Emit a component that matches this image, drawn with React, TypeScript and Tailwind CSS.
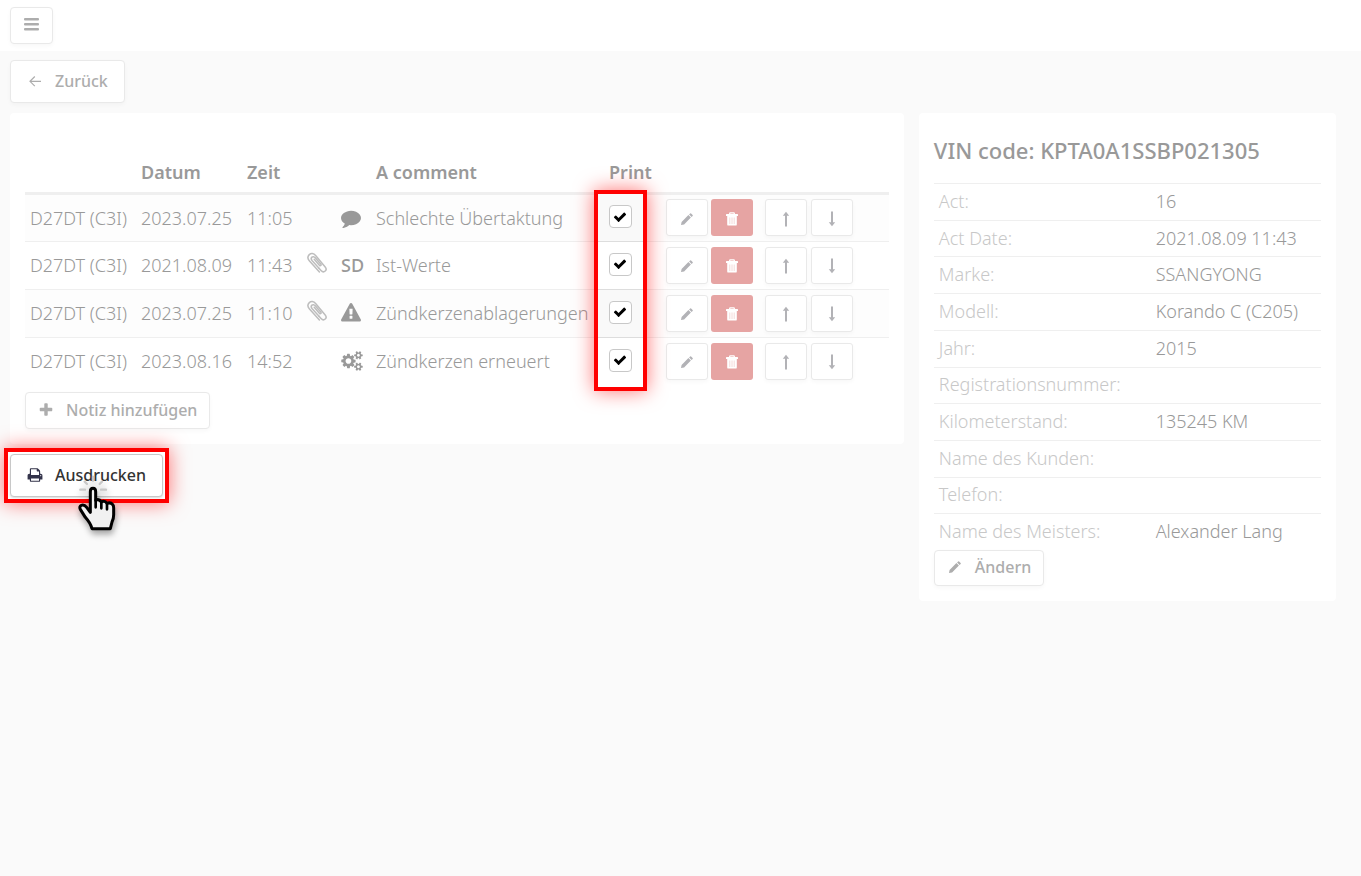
import type { ReactNode } from "react";

const ICONS = {
  comment:
    "M1792 896q0 174-120 321.500t-326 233-450 85.500q-70 0-145-8-198 175-460 242-49 14-114 22-17 2-30.500-9t-17.500-29v-1q-3-4-.5-12t2-10 4.500-9.500l6-9 7-8.500 8-9q7-8 31-34.500t34.500-38 31-39.500 32.500-51 27-59 26-76q-157-89-247.500-220t-90.500-281q0-130 71-248.500t191-204.500 286-136.500 348-50.500q244 0 450 85.500t326 233 120 321.500z",
  warning:
    "M1024 1375v-190q0-14-9.500-23.500t-22.500-9.500h-192q-13 0-22.500 9.500t-9.500 23.500v190q0 14 9.500 23.500t22.500 9.500h192q13 0 22.500-9.500t9.500-23.500zm-2-374l18-459q0-12-10-19-13-11-24-11h-220q-11 0-24 11-10 7-10 21l17 457q0 10 10 16.500t24 6.500h185q14 0 23.500-6.500t10.500-16.500zm-14-934l768 1408q35 63-2 126-17 29-46.500 46t-63.500 17h-1536q-34 0-63.500-17t-46.500-46q-37-63-2-126l768-1408q17-31 47-49t65-18 65 18 47 49z",
  cogs: "M896 896q0-106-75-181t-181-75-181 75-75 181 75 181 181 75 181-75 75-181zm768 512q0-52-38-90t-90-38-90 38-38 90q0 53 37.500 90.500t90.500 37.500 90.500-37.500 37.500-90.500zm0-1024q0-52-38-90t-90-38-90 38-38 90q0 53 37.500 90.500t90.500 37.500 90.500-37.500 37.500-90.500zm-384 421v185q0 10-7 19.500t-16 10.500l-155 24q-11 35-32 76 34 48 90 115 7 11 7 20 0 12-7 19-23 30-82.500 89.500t-78.500 59.500q-11 0-21-7l-115-90q-37 19-77 31-11 108-23 155-7 24-30 24h-186q-11 0-20-7.500t-10-17.500l-23-153q-34-10-75-31l-118 89q-7 7-20 7-11 0-21-8-144-133-144-160 0-9 7-19 10-14 41-53t47-61q-23-44-35-82l-152-24q-10-1-17-9.500t-7-19.500v-185q0-10 7-19.500t16-10.500l155-24q11-35 32-76-34-48-90-115-7-11-7-20 0-12 7-20 22-30 82-89t79-59q11 0 21 7l115 90q34-18 77-32 11-108 23-154 7-24 30-24h186q11 0 20 7.500t10 17.500l23 153q34 10 75 31l118-89q8-7 20-7 11 0 21 8 144 133 144 160 0 8-7 19-12 16-42 54t-45 60q23 48 34 82l152 23q10 2 17 10.500t7 19.500zm640 533v140q0 16-149 31-12 27-30 52 51 113 51 138 0 4-4 7-122 71-124 71-8 0-46-47t-52-68q-20 2-30 2t-30-2q-14 21-52 68t-46 47q-2 0-124-71-4-3-4-7 0-25 51-138-18-25-30-52-149-15-149-31v-140q0-16 149-31 13-29 30-52-51-113-51-138 0-4 4-7 4-2 35-20t59-34 30-16q8 0 46 46.500t52 67.500q20-2 30-2t30 2q51-71 92-112l6-2q4 0 124 70 4 3 4 7 0 25-51 138 17 23 30 52 149 15 149 31zm0-1024v140q0 16-149 31-12 27-30 52 51 113 51 138 0 4-4 7-122 71-124 71-8 0-46-47t-52-68q-20 2-30 2t-30-2q-14 21-52 68t-46 47q-2 0-124-71-4-3-4-7 0-25 51-138-18-25-30-52-149-15-149-31v-140q0-16 149-31 13-29 30-52-51-113-51-138 0-4 4-7 4-2 35-20t59-34 30-16q8 0 46 46.500t52 67.500q20-2 30-2t30 2q51-71 92-112l6-2q4 0 124 70 4 3 4 7 0 25-51 138 17 23 30 52 149 15 149 31z",
  plus: "M1600 736v192q0 40-28 68t-68 28h-416v416q0 40-28 68t-68 28h-192q-40 0-68-28t-28-68v-416h-416q-40 0-68-28t-28-68v-192q0-40 28-68t68-28h416v-416q0-40 28-68t68-28h192q40 0 68 28t28 68v416h416q40 0 68 28t28 68z",
  print:
    "M448 1536h896v-256h-896v256zm0-640h896v-384h-160q-40 0-68-28t-28-68v-160h-640v640zm1152 64q0-26-19-45t-45-19-45 19-19 45 19 45 45 19 45-19 19-45zm128 0v416q0 13-9.500 22.500t-22.500 9.500h-224v160q0 40-28 68t-68 28h-960q-40 0-68-28t-28-68v-160h-224q-13 0-22.500-9.500t-9.500-22.500v-416q0-79 56.500-135.500t135.500-56.500h64v-544q0-40 28-68t68-28h672q40 0 88 20t76 48l152 152q28 28 48 76t20 88v256h64q79 0 135.500 56.500t56.500 135.500z",
  check:
    "M1671 566q0 40-28 68l-724 724-136 136q-28 28-68 28t-68-28l-136-136-362-362q-28-28-28-68t28-68l136-136q28-28 68-28t68 28l294 295 656-657q28-28 68-28t68 28l136 136q28 28 28 68z",
};

function Glyph({ name, className, wide = false }: { name: keyof typeof ICONS; className: string; wide?: boolean }) {
  return (
    <svg viewBox={wide ? "0 0 1920 1792" : "0 0 1792 1792"} className={className} fill="currentColor" aria-hidden="true">
      <path d={ICONS[name]} />
    </svg>
  );
}

function Pencil({ className }: { className: string }) {
  return (
    <svg viewBox="0 0 12 12" className={className} fill="currentColor" aria-hidden="true">
      <path d="M0 12 .6 8.9 7.400 2.100 9.900 4.600 3.100 11.400 0 12zM8.100 1.400 9.100.4Q9.600-.1 10.100.4L11.600 1.900Q12.100 2.400 11.600 2.900L10.600 3.900z" />
    </svg>
  );
}

function Trash() {
  return (
    <svg viewBox="0 0 12 14" className="h-3.5 w-3" fill="none" aria-hidden="true">
      <path d="M3.7 2V1.4Q3.7.8 4.3.8H7.7Q8.3.8 8.3 1.4V2" stroke="white" strokeWidth="1.3" />
      <path d="M.7 1.9H11.3Q12 1.9 12 2.6V4H0V2.6Q0 1.9.7 1.9zM1.2 4H10.8V12.4Q10.8 13.6 9.6 13.6H2.4Q1.2 13.6 1.2 12.4z" fill="white" />
      <path d="M3.8 5.5V12M6 5.5V12M8.2 5.5V12" stroke="#f3d6d5" strokeWidth=".9" />
    </svg>
  );
}

function VerticalArrow({ down = false }: { down?: boolean }) {
  return (
    <svg viewBox="0 0 8 16" className={down ? "h-4 w-2 rotate-180" : "h-4 w-2"} aria-hidden="true">
      <path d="M3 15.500V4.800H.8L4 .8 7.200 4.800H5V15.500z" fill="currentColor" />
    </svg>
  );
}

function Clip() {
  return (
    <svg viewBox="0 0 20 22" className="mb-1 h-[22px] w-5" fill="none" stroke="#bdbdbd" strokeWidth="1.5" strokeLinecap="round" aria-hidden="true">
      <path d="M7.200 7.200 12.600 13.400C13.400 14.300 14.700 13.200 13.900 12.200L8.300 5.700C5.800 3 2.900 6 5 8.500L12 16.300" />
      <path d="M12 16.300 14 18.500C17 21.700 20.800 18 18.200 14.900L8.600 3.400C6.700 1.200 4 1 2.300 2.600.6 4.200.6 6.800 2.500 9L12.400 20" />
    </svg>
  );
}

function HandCursor() {
  return (
    <svg viewBox="225 285 135 195" className="pointer-events-none absolute top-[21px] left-[65px] z-20 h-[65px] w-[45px] drop-shadow-[1px_4px_3px_rgba(0,0,0,0.35)]" fill="none" aria-hidden="true">
      <path d="M241 329H255M303 329H318M254 305 261 312M306 305 299 312M279 290V302" stroke="#c8c8c8" strokeWidth="7" strokeLinecap="round" />
      <path d="M271 397V335Q271 325 279 325T287 335V361Q297 355 304 366 314 360 321 370 332 366 338 374 341 377 341 384V404Q341 416 336 426L331 446H276Q272 430 256 412L241 388Q237 379 244 376 253 373 260 382z" fill="#f1f1f1" stroke="black" strokeWidth="9" strokeLinejoin="round" />
      <path d="M287 361V382M304 366V385M321 370V388" stroke="black" strokeWidth="8" strokeLinecap="round" />
    </svg>
  );
}

const buttonBase = "flex items-center rounded border border-[#e9e9e9] bg-white pb-0.5 text-base font-medium text-[#adadad] shadow-[0_2px_4px_rgba(0,0,0,0.03)]";
const squareButton = "flex h-[37px] w-[42px] items-center justify-center rounded-[3px] border border-[#e9e9e9] bg-white pt-0.5 text-[#b2b2b6] shadow-[0_2px_4px_rgba(0,0,0,0.03)]";

type Note = { date: string; time: string; clip: boolean; icon: ReactNode; comment: string };

const notes: Note[] = [
  { date: "2023.07.25", time: "11:05", clip: false, icon: <Glyph name="comment" className="h-5 w-5" />, comment: "Schlechte Übertaktung" },
  { date: "2021.08.09", time: "11:43", clip: true, icon: "SD", comment: "Ist-Werte" },
  { date: "2023.07.25", time: "11:10", clip: true, icon: <Glyph name="warning" className="h-5 w-5" />, comment: "Zündkerzenablagerungen" },
  { date: "2023.08.16", time: "14:52", clip: false, icon: <Glyph name="cogs" wide className="h-5 w-[22px]" />, comment: "Zündkerzen erneuert" },
];

const details: [string, string][] = [
  ["Act:", "16"],
  ["Act Date:", "2021.08.09 11:43"],
  ["Marke:", "SSANGYONG"],
  ["Modell:", "Korando C (C205)"],
  ["Jahr:", "2015"],
  ["Registrationsnummer:", ""],
  ["Kilometerstand:", "135245 KM"],
  ["Name des Kunden:", ""],
  ["Telefon:", ""],
  ["Name des Meisters:", "Alexander Lang"],
];

function PrintHighlight() {
  return (
    <span className="pointer-events-none absolute -top-[5px] -left-2.5 flex h-[201px] w-[53px] flex-col border-4 border-[#ff0000] bg-white shadow-[0_0_20px_rgba(255,0,0,0.55)]">
      {notes.map((note) => (
        <span key={note.comment} className="h-12 border-b border-[#ddd] odd:bg-[#f9f9f9] last:border-b-0" />
      ))}
    </span>
  );
}

function NoteRow({ note, first }: { note: Note; first: boolean }) {
  return (
    <tr className="h-12 border-b border-[#efefef] odd:bg-[#fdfdfd] last:border-b-0">
      <td className="px-[5px]">D27DT (C3I)</td>
      <td className="px-[5px]">{note.date}</td>
      <td className="px-[5px]">{note.time}</td>
      <td className="px-[5px]">{note.clip && <Clip />}</td>
      <td className="px-[5px] font-medium">{note.icon}</td>
      <td className="px-[5px] whitespace-nowrap">{note.comment}</td>
      <td className="relative px-[5px] pb-0.5">
        {first && <PrintHighlight />}
        <label className="relative z-10 grid h-[23px] w-[23px] place-items-center">
          <input
            type="checkbox"
            defaultChecked
            aria-label={`Print ${note.comment}`}
            className="peer col-start-1 row-start-1 h-[23px] w-[23px] appearance-none rounded border border-[#c8c8c8] bg-white"
          />
          <Glyph name="check" className="pointer-events-none invisible col-start-1 row-start-1 mr-0.5 h-3.5 w-3.5 text-black peer-checked:visible" />
        </label>
      </td>
      <td className="px-[5px]">
        <div className="flex gap-3">
          <div className="flex gap-[3px]">
            <button type="button" aria-label="Edit" className={squareButton}>
              <Pencil className="h-3 w-3" />
            </button>
            <button type="button" aria-label="Delete" className="flex h-[37px] w-[42px] items-center justify-center rounded-[3px] bg-[#e6a4a3] pt-0.5">
              <Trash />
            </button>
          </div>
          <div className="flex gap-1">
            <button type="button" aria-label="Move up" className={squareButton}>
              <VerticalArrow />
            </button>
            <button type="button" aria-label="Move down" className={squareButton}>
              <VerticalArrow down />
            </button>
          </div>
        </div>
      </td>
    </tr>
  );
}

export default function App() {
  return (
    <div className="min-h-screen bg-[#fafafa] font-['Noto_Sans','Open_Sans',sans-serif] text-lg font-[350] text-[#999]">
      <header className="flex h-[51px] items-center bg-white px-2.5">
        <button type="button" aria-label="Menu" className={`${buttonBase} h-[37px] w-[43px] justify-center`}>
          <svg viewBox="0 0 15 13" className="h-[13px] w-[15px]" fill="currentColor" aria-hidden="true">
            <rect width="15" height="2.600" rx="1" />
            <rect y="5" width="15" height="2.600" rx="1" />
            <rect y="10" width="15" height="2.600" rx="1" />
          </svg>
        </button>
      </header>
      <main className="pt-[9px] pr-[25px] pl-2.5">
        <button type="button" className={`${buttonBase} h-[43px] gap-3 px-4`}>
          <svg viewBox="0 0 16 16" className="h-4 w-4" fill="none" stroke="currentColor" strokeWidth="1.2" aria-hidden="true">
            <path d="M14 8.300H3M7.800 3.500 3 8.300 7.800 13.100" />
          </svg>
          Zurück
        </button>
        <div className="mt-2.5 grid grid-cols-[15fr_7fr] items-start gap-[15px]">
          <div>
            <section className="rounded bg-white px-[15px] pt-10 pb-[15px]">
              <table className="w-full table-fixed border-collapse text-left">
                <colgroup>
                  <col className="w-[111px]" />
                  <col className="w-[106px]" />
                  <col className="w-[60px]" />
                  <col className="w-[34px]" />
                  <col className="w-[35px]" />
                  <col className="w-[233px]" />
                  <col className="w-[57px]" />
                  <col />
                </colgroup>
                <thead>
                  <tr className="h-10 border-b-3 border-[#efefef] [&>th]:px-[5px] [&>th]:font-semibold">
                    <th />
                    <th>Datum</th>
                    <th>Zeit</th>
                    <th />
                    <th />
                    <th>A comment</th>
                    <th>Print</th>
                    <th />
                  </tr>
                </thead>
                <tbody>
                  {notes.map((note, i) => (
                    <NoteRow key={note.comment} note={note} first={i === 0} />
                  ))}
                </tbody>
              </table>
              <button type="button" className={`${buttonBase} mt-[7px] h-[37px] gap-3 px-3`}>
                <Glyph name="plus" className="h-4 w-4" />
                Notiz hinzufügen
              </button>
            </section>
            <div className="relative mt-2.5 w-fit">
              <span className="pointer-events-none absolute -inset-1.5 border-4 border-[#ff0000] bg-white shadow-[0_0_20px_rgba(255,0,0,0.55)]" />
              <button type="button" className="relative flex h-[43px] items-center gap-3 rounded border border-[#c8c8c8] bg-white px-4 pb-0.5 text-base font-medium text-[#333] shadow-[0_1px_2px_rgba(0,0,0,0.15)]">
                <Glyph name="print" className="h-4 w-4 text-[#33334a]" />
                Ausdrucken
              </button>
              <HandCursor />
            </div>
          </div>
          <aside className="rounded bg-white p-[15px]">
            <h1 className="mt-1.5 text-[22px] leading-8 font-medium">VIN code: KPTA0A1SSBP021305</h1>
            <table className="mt-[17px] h-[367px] w-full table-fixed border-collapse text-left">
              <colgroup>
                <col className="w-[56%]" />
                <col />
              </colgroup>
              <tbody>
                {details.map(([label, value]) => (
                  <tr key={label} className="border-t border-[#efefef] leading-6">
                    <th scope="row" className="px-[5px] pb-0.5 font-[350] text-[#c8c8c8]">
                      {label}
                    </th>
                    <td className="px-[5px] pb-0.5 whitespace-nowrap">{value}</td>
                  </tr>
                ))}
              </tbody>
            </table>
            <button type="button" className={`${buttonBase} h-9 gap-3 px-3`}>
              <Pencil className="mx-0.5 h-3 w-3" />
              Ändern
            </button>
          </aside>
        </div>
      </main>
    </div>
  );
}
